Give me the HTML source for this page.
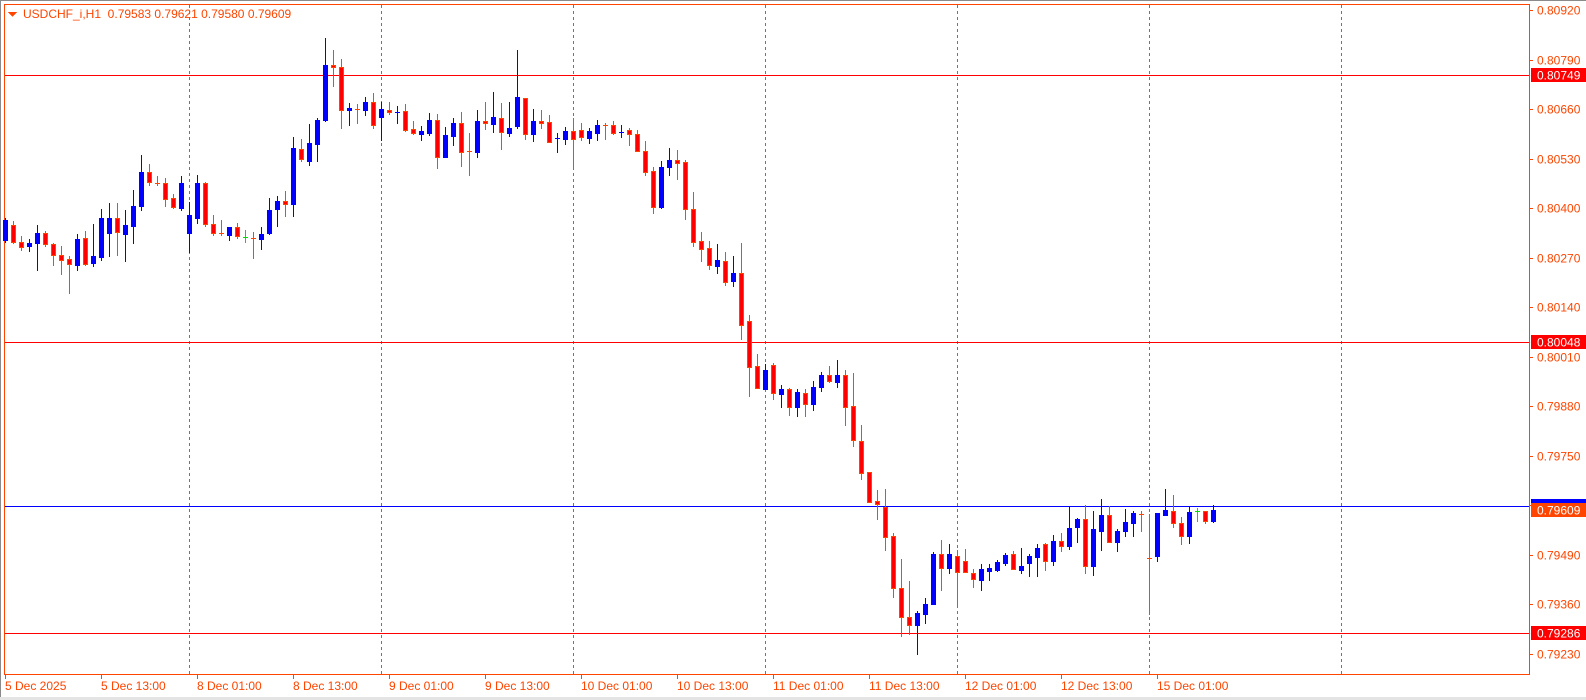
<!DOCTYPE html>
<html><head><meta charset="utf-8"><style>
html,body{margin:0;padding:0;background:#fff;width:1586px;height:700px;overflow:hidden}
svg{display:block}
text{font-family:"Liberation Sans",sans-serif;font-size:12px}
</style></head><body>
<svg id="s" width="1586" height="700" xmlns="http://www.w3.org/2000/svg" shape-rendering="crispEdges">
<rect x="0" y="0" width="1586" height="1" fill="#8a8a8a"/>
<rect x="0" y="0" width="1" height="700" fill="#8a8a8a"/>
<rect x="0" y="697" width="1586" height="3" fill="#e4e4e4"/>
<g id="grid" stroke="#ff4500" stroke-width="1" stroke-dasharray="3,3"></g>
<rect x="4.5" y="4.5" width="1525" height="670" fill="none" stroke="#ff4500"/>
<line x1="5" y1="75.5" x2="1529" y2="75.5" stroke="#ff0000"/>
<line x1="5" y1="342.5" x2="1529" y2="342.5" stroke="#ff0000"/>
<line x1="5" y1="633.5" x2="1529" y2="633.5" stroke="#ff0000"/>
<line x1="5" y1="506.5" x2="1529" y2="506.5" stroke="#0000ff"/>
<g id="c"></g>
<g id="ax"></g>
<polygon points="8,12 17,12 12.5,17" fill="#ff4500"/>
<text x="23" y="18" fill="#ff4500">USDCHF_i,H1&#160;&#160;0.79583 0.79621 0.79580 0.79609</text>
</svg>
<script>
var NS="http://www.w3.org/2000/svg";
function el(p,t,a,tx){var e=document.createElementNS(NS,t);for(var k in a)e.setAttribute(k,a[k]);if(tx)e.textContent=tx;p.appendChild(e);return e;}
var grid=document.getElementById('grid');
[189,381,573,765,957,1149,1341].forEach(function(x){el(grid,'line',{x1:x+.5,y1:5,x2:x+.5,y2:674});});
var ax=document.getElementById('ax');
var prices=["0.80920","0.80790","0.80660","0.80530","0.80400","0.80270","0.80140","0.80010","0.79880","0.79750","0.79620","0.79490","0.79360","0.79230"];
prices.forEach(function(p,k){var y=Math.round(10+49.54*k);
 el(ax,'line',{x1:1529,y1:y+.5,x2:1533,y2:y+.5,stroke:'#ff4500'});
 if(k!=10)el(ax,'text',{x:1537,y:y+4.5,fill:'#ff4500'},p);});
function box(y,bg,t){el(ax,'rect',{x:1531,y:y-7,width:55,height:14,fill:bg});el(ax,'text',{x:1537,y:y+4.5,fill:'#fff'},t);}
box(75,'#ff0000','0.80749');box(342,'#ff0000','0.80048');box(633,'#ff0000','0.79286');
el(ax,'rect',{x:1531,y:499,width:55,height:14,fill:'#0000ff'});
box(510,'#ff4500','0.79609');
var labs=["5 Dec 2025","5 Dec 13:00","8 Dec 01:00","8 Dec 13:00","9 Dec 01:00","9 Dec 13:00","10 Dec 01:00","10 Dec 13:00","11 Dec 01:00","11 Dec 13:00","12 Dec 01:00","12 Dec 13:00","15 Dec 01:00"];
labs.forEach(function(l,k){var x=5+96*k;el(ax,'line',{x1:x+.5,y1:674,x2:x+.5,y2:679,stroke:'#ff4500'});el(ax,'text',{x:x,y:690,fill:'#ff4500'},l);});
var D=[[240,220,218,242],[225,242,221,243],[242,247,236,250],[246,243,239,251],[243,233,225,270],[233,244,231,246],[244,255,243,265],[255,260,246,274],[259,264,256,293],[265,239,234,270],[238,264,231,265],[263,256,224,266],[257,218,209,260],[233,218,203,256],[218,232,203,255],[234,225,210,261],[226,206,190,243],[206,172,155,210],[172,182,164,185],[183,183,176,185],[183,199,178,206],[198,207,194,208],[208,183,176,210],[233,215,202,252],[218,183,175,223],[183,224,182,226],[224,233,215,235],[233,233,220,235],[235,227,227,240],[227,236,223,238],['g',237,230,242],[238,238,232,258],[239,234,227,249],[233,210,198,234],[209,201,196,226],[201,204,191,216],[204,148,137,216],[149,159,139,161],[161,143,124,165],[144,120,118,161],[120,65,38,121],[65,67,50,86],[67,110,59,128],[110,108,103,125],[109,109,104,123],[110,102,97,115],[102,125,93,128],[117,109,102,140],[110,112,102,114],['b',112,106,123],[111,130,104,131],[129,133,121,134],[134,131,126,140],[133,120,113,135],[120,157,114,168],[157,135,127,157],[136,123,118,145],[123,152,112,166],[151,151,133,175],[152,121,110,157],[121,123,102,129],[124,117,92,132],[118,132,103,149],[133,128,102,136],[126,97,50,128],[98,134,98,139],[134,121,109,141],[121,123,110,128],[122,142,115,142],['b',138,133,152],[139,131,127,144],[131,139,118,169],[130,137,123,140],[138,131,128,143],[133,125,120,140],[125,125,123,139],[125,133,121,134],['b',132,125,137],[130,134,128,145],[134,151,130,151],[151,172,141,175],[171,207,167,213],[207,167,161,208],[167,160,148,175],[160,163,150,179],[162,209,160,219],[209,242,192,246],[241,249,232,261],[248,265,241,269],[266,260,244,273],[261,282,252,285],[281,273,256,286],[273,325,243,339],[321,367,315,396],[366,388,354,388],[389,370,364,389],[365,393,363,399],[394,389,385,407],[389,407,388,415],[407,392,389,416],[393,404,389,416],[404,387,381,410],[387,375,372,391],[375,381,366,382],[382,375,360,387],[375,407,370,425],[406,440,373,446],[441,473,425,479],[472,502,472,502],[501,504,490,519],[507,537,489,550],[536,588,533,597],[588,617,559,636],[617,625,581,634],[625,613,611,654],[614,604,598,623],[604,554,552,604],[554,568,540,590],[568,554,544,573],[556,572,550,607],[561,572,549,572],[573,579,569,587],[580,569,564,590],[571,568,564,580],[570,562,560,571],[563,555,553,565],[554,569,551,569],[570,566,548,573],[563,556,554,576],[557,548,544,576],[544,561,543,570],[561,541,535,565],[541,546,533,551],[546,528,506,549],[527,519,518,542],[519,566,505,573],[566,529,511,575],[531,515,499,550],[515,542,506,542],[542,531,529,551],[531,522,509,536],[523,513,511,536],[514,514,511,531],[558,558,514,614],[556,513,513,561],[515,510,489,515],[511,523,495,527],[523,536,517,544],[536,512,507,543],['g',511,508,521],[511,521,511,523],[521,510,505,522]];
var g=document.getElementById('c');
D.forEach(function(d,i){var x=5+8*i;
 if(typeof d[0]=='string'){var col=d[0]=='g'?'#00e000':'#0000ff';var y=d[1];
  el(g,'rect',{x:x,y:d[2],width:1,height:d[3]-d[2]+1,fill:col});
  el(g,'rect',{x:x-2,y:y,width:5,height:1,fill:col});return;}
 var o=d[0],c=d[1],h=d[2],l=d[3];
 var bull=c<o;var top=Math.min(o,c),bot=Math.max(o,c);
 var wc=bull?'#0000ff':'#ff4500';
 el(g,'rect',{x:x,y:h,width:1,height:l-h+1,fill:wc});
 if(bot-top<2){el(g,'rect',{x:x-2,y:top,width:5,height:Math.max(1,bot-top+1),fill:wc});return;}
 if(bull){el(g,'rect',{x:x-2,y:top,width:5,height:bot-top+1,fill:'#0000ff'});}
 else{el(g,'rect',{x:x-2,y:top,width:5,height:bot-top+1,fill:'#ff4500'});el(g,'rect',{x:x-1,y:top+1,width:3,height:bot-top-1,fill:'#ff0000'});}
});
</script>
</body></html>
